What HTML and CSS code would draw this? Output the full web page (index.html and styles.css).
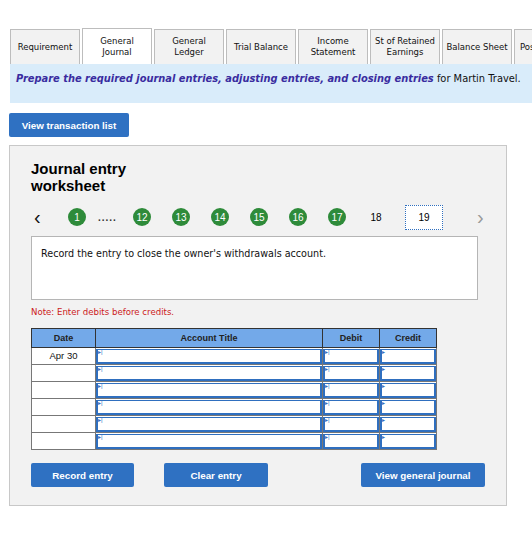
FILE: index.html
```html
<!DOCTYPE html>
<html>
<head>
<meta charset="utf-8">
<link rel="stylesheet" href="styles.css">
</head>
<body>
<div class="tabs">
  <div class="tab">Requirement</div>
  <div class="tab active">General<br>Journal</div>
  <div class="tab">General<br>Ledger</div>
  <div class="tab">Trial Balance</div>
  <div class="tab">Income<br>Statement</div>
  <div class="tab">St of Retained<br>Earnings</div>
  <div class="tab">Balance Sheet</div>
  <div class="tab last">Post-Closing</div>
</div>
<div class="instr"><b><i>Prepare the required journal entries, adjusting entries, and closing entries</i></b> for Martin Travel.</div>
<div class="btnrow"><button class="btn">View transaction list</button></div>
<div class="panel">
  <h1 class="title">Journal entry<br>worksheet</h1>
  <div class="pager">
    <span class="arrow left">&lsaquo;</span>
    <span class="dot">1</span>
    <span class="dots">.....</span>
    <span class="dot">12</span>
    <span class="dot">13</span>
    <span class="dot">14</span>
    <span class="dot">15</span>
    <span class="dot">16</span>
    <span class="dot">17</span>
    <span class="plain">18</span>
    <span class="cur">19</span>
    <span class="arrow right">&rsaquo;</span>
  </div>
  <div class="desc">Record the entry to close the owner's withdrawals account.</div>
  <div class="note">Note: Enter debits before credits.</div>
  <table class="grid">
    <thead>
      <tr><th class="c-date">Date</th><th class="c-acct">Account Title</th><th class="c-num">Debit</th><th class="c-num">Credit</th></tr>
    </thead>
    <tbody>
      <tr><td class="date">Apr 30</td><td class="in"><div class="box"><span class="mk">&#9656;|</span></div></td><td class="in"><div class="box"><span class="mk">&#9656;|</span></div></td><td class="in"><div class="box"><span class="mk">&#9656;</span></div></td></tr>
      <tr><td class="date"></td><td class="in"><div class="box"><span class="mk">&#9656;|</span></div></td><td class="in"><div class="box"><span class="mk">&#9656;|</span></div></td><td class="in"><div class="box"><span class="mk">&#9656;</span></div></td></tr>
      <tr><td class="date"></td><td class="in"><div class="box"><span class="mk">&#9656;|</span></div></td><td class="in"><div class="box"><span class="mk">&#9656;|</span></div></td><td class="in"><div class="box"><span class="mk">&#9656;</span></div></td></tr>
      <tr><td class="date"></td><td class="in"><div class="box"><span class="mk">&#9656;|</span></div></td><td class="in"><div class="box"><span class="mk">&#9656;|</span></div></td><td class="in"><div class="box"><span class="mk">&#9656;</span></div></td></tr>
      <tr><td class="date"></td><td class="in"><div class="box"><span class="mk">&#9656;|</span></div></td><td class="in"><div class="box"><span class="mk">&#9656;|</span></div></td><td class="in"><div class="box"><span class="mk">&#9656;</span></div></td></tr>
      <tr><td class="date"></td><td class="in"><div class="box"><span class="mk">&#9656;|</span></div></td><td class="in"><div class="box"><span class="mk">&#9656;|</span></div></td><td class="in"><div class="box"><span class="mk">&#9656;</span></div></td></tr>
    </tbody>
  </table>
  <div class="actions">
    <button class="btn wide">Record entry</button>
    <button class="btn wide">Clear entry</button>
    <button class="btn wider">View general journal</button>
  </div>
</div>
</body>
</html>
```
FILE: styles.css
```css
html, body { margin: 0; padding: 0; background: #fff; overflow: hidden; }
body { width: 532px; height: 557px; font-family: "DejaVu Sans", Verdana, sans-serif; color: #000; }

.tabs { display: flex; gap: 2px; padding: 29px 0 0 10px; height: 35px; align-items: flex-end; white-space: nowrap; overflow: hidden; }
.tab { flex: 0 0 70px; height: 35px; box-sizing: border-box; border: 1px solid #bdbdbd; border-bottom: none; background: #f2f2f2; font-size: 8.5px; line-height: 11px; text-align: center; display: flex; align-items: center; justify-content: center; color: #111; overflow: hidden; }
.tab.active { background: #fff; height: 37px; margin-bottom: -1px; position: relative; z-index: 1; }
.tab.last { flex-basis: 19px; justify-content: flex-start; padding-left: 5px; }

.instr { margin-left: 10px; background: #d9ecfa; height: 39px; box-sizing: border-box; padding: 9px 0 0 6px; font-size: 9.9px; white-space: nowrap; color: #111; }
.instr b { color: #3a2ca0; }

.btnrow { padding: 10px 0 0 9px; }
.btn { font-family: "Liberation Sans", Arial, sans-serif; font-weight: bold; font-size: 9.8px; color: #fff; background: #2f71c2; border: none; border-radius: 2px; height: 24px; padding: 0 6px; cursor: pointer; white-space: nowrap; }
.btnrow .btn { width: 120px; }

.panel { margin: 8px 0 0 9px; width: 498px; height: 361px; box-sizing: border-box; border: 1px solid #c8c8c8; background: #f2f2f2; padding: 0 0 0 21px; }
.title { font-family: "Liberation Sans", Arial, sans-serif; font-size: 15px; line-height: 17px; font-weight: bold; margin: 14px 0 0 0; }

.pager { display: flex; align-items: center; height: 26px; margin-top: 10px; font-family: "Liberation Sans", Arial, sans-serif; font-size: 10px; }
.arrow { font-size: 20px; line-height: 20px; width: 24px; text-align: left; padding-left: 3px; box-sizing: border-box; }
.arrow.left { color: #111; margin-right: 13px; }
.arrow.right { color: #999; margin-left: 31px; }
.dot { width: 18px; height: 18px; border-radius: 50%; background: #2e8b3a; color: #fff; display: flex; align-items: center; justify-content: center; margin-right: 21px; }
.dots { width: 24px; margin: 0 11px 0 -9px; letter-spacing: 1px; font-weight: bold; color: #333; }
.plain { width: 18px; text-align: center; margin-right: 20px; }
.cur { width: 38px; height: 25px; box-sizing: border-box; border: 1px dotted #2f6fbf; background: #fff; display: flex; align-items: center; justify-content: center; }

.desc { width: 447px; height: 64px; box-sizing: border-box; margin-top: 6px; background: #fff; border: 1px solid #b5b5b5; padding: 11px 0 0 9px; font-size: 9.6px; color: #111; }
.note { color: #cc1a1a; font-size: 8.6px; margin-top: 7px; }

.grid { border-collapse: collapse; margin-top: 11px; font-family: "Liberation Sans", Arial, sans-serif; font-size: 9px; }
.grid th { background: #73a9e9; height: 19px; padding: 0; border: 1px solid #333; box-sizing: border-box; font-weight: bold; color: #222; }
.c-date { width: 64px; }
.c-acct { width: 227px; }
.c-num { width: 57px; }
.grid td { height: 17px; padding: 0; border: 1px solid #777; box-sizing: border-box; }
.grid td.date { text-align: center; vertical-align: top; padding-top: 2px; font-size: 9.5px; color: #111; background: #fff; }
.grid td.in { background: #fff; }
.box { height: 15px; box-sizing: border-box; border: 2px solid #2f6fbf; border-top-width: 1px; background: #fff; position: relative; }
.mk { position: absolute; left: 0; top: -2px; font-size: 6px; line-height: 8px; color: #2f6fbf; }

.actions { display: flex; margin-top: 13px; }
.btn.wide { width: 103px; }
.actions .btn:nth-child(2) { margin-left: 30px; width: 104px; }
.btn.wider { margin-left: 93px; width: 124px; }
```
